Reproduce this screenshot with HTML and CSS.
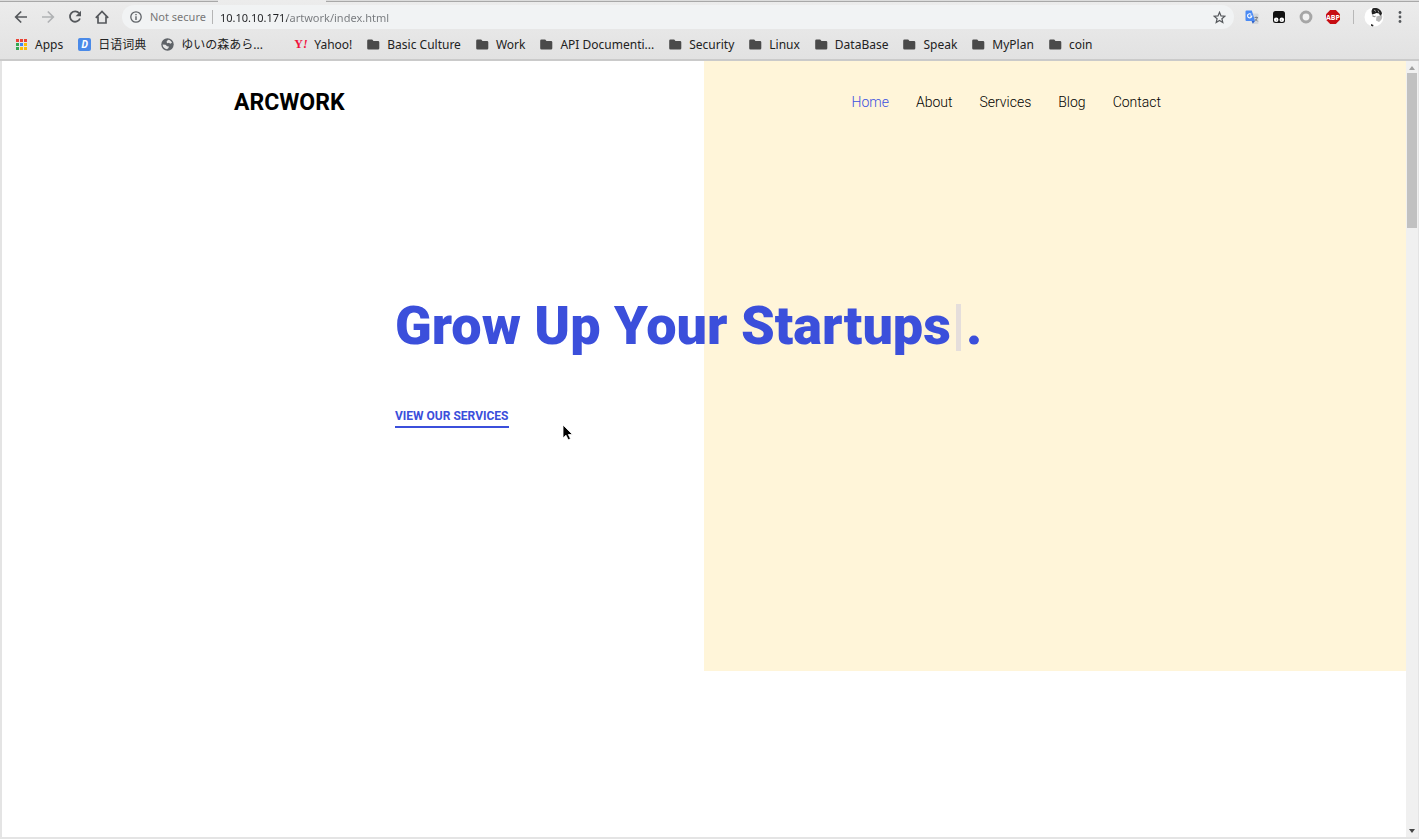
FILE: index.html
```
<!DOCTYPE html>
<html lang="en">
<head>
    <meta charset="UTF-8">
    <title>Arcwork</title>
    <link rel="stylesheet" href="styles.css">
</head>
<body>
    <svg class="symbols" width="0" height="0" aria-hidden="true">
        <symbol id="folder" viewBox="0 0 13 13">
            <path fill="#4a4a4a" d="M1.500 1.500h3.700l1.300 1.500h4.500a1.300 1.300 0 0 1 1.300 1.300v5.900a1.300 1.300 0 0 1-1.300 1.300h-9.500A1.300 1.300 0 0 1 .2 10.200V2.800a1.300 1.300 0 0 1 1.300-1.300z"/>
        </symbol>
    </svg>

    <header class="chrome">
        <div class="tabs"><span class="tab"></span><span class="tab-active"></span><span class="tab-rest"></span></div>

        <div class="toolbar">
            <button class="tool" aria-label="Back">
                <svg width="14" height="14" viewBox="0 0 14 14" fill="none" stroke="#55585c" stroke-width="1.700"><path d="M13 7H2M7.200 1.500L1.700 7l5.500 5.500"/></svg>
            </button>
            <button class="tool" aria-label="Forward">
                <svg width="14" height="14" viewBox="0 0 14 14" fill="none" stroke="#b0b2b4" stroke-width="1.700"><path d="M1 7h11M6.800 1.500L12.300 7l-5.500 5.500"/></svg>
            </button>
            <button class="tool" aria-label="Reload">
                <svg width="14" height="14" viewBox="0 0 14 14"><path fill="none" stroke="#55585c" stroke-width="1.800" d="M11.200 3.200A5.200 5.200 0 1 0 12 8.500"/><path fill="#55585c" d="M13 .8v5.400H7.600z"/></svg>
            </button>
            <button class="tool" aria-label="Home page">
                <svg width="14" height="14" viewBox="0 0 14 14"><path fill="none" stroke="#55585c" stroke-width="1.700" d="M.8 7.800L7 1.500l6.200 6.300M3 6.500v6.500h8V6.500"/></svg>
            </button>

            <div class="address">
                <svg width="12" height="12" viewBox="0 0 12 12"><circle cx="6" cy="6" r="5.200" fill="none" stroke="#5f6368" stroke-width="1.300"/><path fill="#5f6368" d="M5.300 5.200h1.400v3.800H5.300zM5.300 2.900h1.400v1.400H5.300z"/></svg>
                <label class="secure" for="url">Not secure</label>
                <input class="url" id="url" type="text" value="10.10.10.171/artwork/index.html">
                <button class="star" aria-label="Bookmark this page">
                    <svg width="13" height="13" viewBox="0 0 13 13"><path fill="none" stroke="#55585c" stroke-width="1.200" d="M6.500 1.300L8 4.900l3.900.3-3 2.500.9 3.800-3.300-2-3.300 2 .9-3.800-3-2.500 3.900-.3z"/></svg>
                </button>
            </div>

            <div class="extensions">
                <button class="ext" aria-label="Translate">
                    <svg width="14" height="14" viewBox="0 0 14 14"><path fill="#d3d6da" d="M5 3.500h7.500a1 1 0 0 1 1 1V13a1 1 0 0 1-1 1H8z"/><path fill="#4a8af4" d="M1.500.5h5.300L10 11H1.500a1 1 0 0 1-1-1V1.500a1 1 0 0 1 1-1z"/><path fill="#2f62c8" d="M6.600 11H10l-2.200 2.800z"/><path fill="none" stroke="#fff" stroke-width="1.100" d="M6.200 4.300a2.100 2.100 0 1 0 .6 1.700H4.900"/><path fill="none" stroke="#7c8288" d="M9.500 7.500h3.500M11.200 6.500v1M12.300 7.500c-.3 1.400-1 2.500-2 3.200M10.300 9l2.400 2.400"/></svg>
                </button>
                <button class="ext" aria-label="Tampermonkey">
                    <svg width="14" height="14" viewBox="0 0 14 14"><rect x="1" y="1" width="12" height="12" rx="2.500" fill="#111"/><circle cx="4.200" cy="9.700" r="2.300" fill="#fff"/><circle cx="9.800" cy="9.700" r="2.300" fill="#fff"/><circle cx="4.700" cy="10" r=".4"/><circle cx="9.300" cy="10" r=".4"/></svg>
                </button>
                <button class="ext" aria-label="Proxy">
                    <svg width="14" height="14" viewBox="0 0 14 14"><circle cx="7" cy="7" r="4.900" fill="#f2f2f2" stroke="#a6a6a6" stroke-width="3"/></svg>
                </button>
                <button class="ext adblock" aria-label="Adblock Plus"><span>ABP</span></button>
                <span class="divider"></span>
                <button class="avatar" aria-label="Profile">
                    <svg width="20" height="20" viewBox="0 0 20 20"><circle cx="10" cy="10" r="9.500" fill="#fff"/><path fill="#222" d="M8.500 1.500C12 0 17.500 2 18 6.500l-1.500 3-1.500-3-2.500-.5-2.500 1L8 7.500 7.500 4z"/><path fill="#b9b9b9" d="M12.500 9.500L18 8c.8 3-.5 5-3 7l-3-1.500z"/><path fill="#999" d="M8.500 7.500l1.500 1.500 2-.3-1 1.500-2.500-.5z"/><path fill="#222" d="M7 17l2.500 1-.5 1.500-2-.7z"/><path fill="none" stroke="#ddd" stroke-width=".7" d="M10 3l2 1.500M14 3.500l1 2"/></svg>
                </button>
                <button class="menu" aria-label="Menu">
                    <svg width="4" height="14" viewBox="0 0 4 14" fill="#55585c"><circle cx="2" cy="2.500" r="1.400"/><circle cx="2" cy="7" r="1.400"/><circle cx="2" cy="11.500" r="1.400"/></svg>
                </button>
            </div>
        </div>

        <nav class="bookmarks" aria-label="Bookmarks">
            <a href="#">
                <svg width="13" height="13" viewBox="0 0 13 13"><path fill="#ea4335" d="M1 1h3v3H1zM5 1h3v3H5zM9 1h3v3H9z"/><path fill="#34a853" d="M1 5h3v3H1zM1 9h3v3H1z"/><path fill="#4285f4" d="M5 5h3v3H5z"/><path fill="#fbbc05" d="M9 5h3v3H9zM5 9h3v3H5zM9 9h3v3H9z"/><path stroke="#e6e6e6" d="M4.500 0v13M8.500 0v13M0 4.500h13M0 8.500h13"/></svg>
                Apps
            </a>
            <a href="#"><span class="dict">D</span>日语词典</a>
            <a href="#" class="wide">
                <svg width="13" height="13" viewBox="0 0 13 13"><circle cx="6.500" cy="6.500" r="6.200" fill="#5f6368"/><path fill="#e6e6e6" d="M7 1.800c2 .2 3.500 1.500 4 3l-1.800 1L8 4.700 6.200 5.200 5.500 3.800zM1.600 6.500l3 .2 1.500 1.600 1.800.2-.4 1.500-1.500 1.300C3.800 11 1.700 9.300 1.600 6.500z"/></svg>
                <span>ゆいの森あら...</span>
            </a>
            <a href="#"><span class="yahoo">Y<i>!</i></span>Yahoo!</a>
            <a href="#"><svg width="13" height="13"><use href="#folder"/></svg>Basic Culture</a>
            <a href="#"><svg width="13" height="13"><use href="#folder"/></svg>Work</a>
            <a href="#"><svg width="13" height="13"><use href="#folder"/></svg>API Documenti...</a>
            <a href="#"><svg width="13" height="13"><use href="#folder"/></svg>Security</a>
            <a href="#"><svg width="13" height="13"><use href="#folder"/></svg>Linux</a>
            <a href="#"><svg width="13" height="13"><use href="#folder"/></svg>DataBase</a>
            <a href="#"><svg width="13" height="13"><use href="#folder"/></svg>Speak</a>
            <a href="#"><svg width="13" height="13"><use href="#folder"/></svg>MyPlan</a>
            <a href="#"><svg width="13" height="13"><use href="#folder"/></svg>coin</a>
        </nav>
    </header>

    <div class="viewport">
        <main class="page">
            <section class="hero">
                <div class="navbar">
                    <a class="logo" href="#">ARCWORK</a>
                    <nav class="links">
                        <a class="active" href="#">Home</a>
                        <a href="#">About</a>
                        <a href="#">Services</a>
                        <a href="#">Blog</a>
                        <a href="#">Contact</a>
                    </nav>
                </div>
                <div class="intro">
                    <h1>Grow Up Your Startups<span class="caret"></span>.</h1>
                    <a class="cta" href="#">VIEW OUR SERVICES</a>
                </div>
            </section>
        </main>

        <div class="scrollbar">
            <svg width="12" height="12" viewBox="0 0 12 12"><path fill="#a0a0a0" d="M6 5l3 4H3z"/></svg>
            <div class="thumb"></div>
            <svg class="down" width="12" height="12" viewBox="0 0 12 12"><path fill="#444" d="M3 4h6L6 8z"/></svg>
        </div>
    </div>

    <!-- mouse pointer -->
    <svg class="pointer" width="12" height="18" viewBox="0 0 12 18"><path fill="#000" stroke="#fff" stroke-width=".8" d="M1 1v13l3-2.800 2.200 4.600 2.300-1.100-2.200-4.200h4.200z"/></svg>
</body>
</html>
```
FILE: styles.css
```
* { box-sizing: border-box; }

body {
    margin: 0;
    height: 100vh;
    display: flex;
    flex-direction: column;
    overflow: hidden;
    background-color: #e4e4e4;
    font-family: Roboto, sans-serif;
}

a { text-decoration: none; color: inherit; }
svg { display: block; flex: none; }
.symbols { position: absolute; }

button {
    display: flex;
    align-items: center;
    justify-content: center;
    padding: 0;
    border: none;
    background: none;
}

/* Browser bars */
.chrome {
    height: 61px;
    border-bottom: 2px solid #cacaca;
    background: linear-gradient(#ececec, #e2e2e2);
    font-family: "Noto Sans", "Noto Sans CJK JP", sans-serif;
    font-size: 12px;
}

.tabs { display: flex; height: 2px; }
.tab, .tab-rest { border-bottom: 1px solid #a8a8a8; background-color: #dcdcdc; }
.tab { width: 218px; }
.tab-active { width: 108px; }
.tab-rest { flex: 1; }

.toolbar { display: flex; align-items: center; height: 30px; padding-left: 14px; }
.tool { width: 14px; margin-right: 13px; }

.address {
    flex: 1;
    display: flex;
    align-items: center;
    height: 24px;
    padding: 0 8px;
    border-radius: 12px;
    background-color: #f1f3f4;
    font-size: 11px;
}
.secure { margin-left: 8px; padding-right: 6px; border-right: 1px solid #b5b5b5; line-height: 14px; color: #777; }

/* the host part of the address is darker than the path */
.url {
    flex: 1;
    height: 20px;
    padding: 0 0 0 7px;
    border: none;
    outline: none;
    font: inherit;
    color: transparent;
    background: linear-gradient(to right, #202124 74px, #75787c 74px);
    background-clip: text;
    -webkit-background-clip: text;
}

.extensions { display: flex; align-items: center; margin-left: 11px; padding-right: 17px; }
.ext { width: 14px; height: 14px; margin-right: 13px; }
.adblock {
    background-color: #c70d12;
    clip-path: polygon(30% 0, 70% 0, 100% 30%, 100% 70%, 70% 100%, 30% 100%, 0 70%, 0 30%);
    color: #fff;
    font: bold 7px "Open Sans", sans-serif;
}
.divider { width: 1px; height: 14px; margin-right: 10px; background-color: #b8b8b8; }
.avatar { margin-right: 14px; }

.bookmarks { display: flex; align-items: center; gap: 15px; height: 25px; padding-left: 15px; color: #222; }
.bookmarks a { display: flex; align-items: center; gap: 7px; white-space: nowrap; line-height: 18px; }
.bookmarks .wide { width: 118px; }

.dict {
    width: 13px;
    height: 13px;
    border-radius: 2px;
    background-color: #4a8ae8;
    color: #fff;
    font: italic bold 10px/13px "Open Sans", sans-serif;
    text-align: center;
}
.yahoo { width: 13px; color: #f0123c; font: bold 12px/13px "Liberation Serif", serif; }

/* Page */
.viewport { flex: 1; display: flex; min-height: 0; margin: 0 1px 2px 2px; }
.page { flex: 1; background-color: #fff; }

.hero {
    padding-bottom: 243px;
    background: linear-gradient(to right, #fff 50%, #fff5d9 50%);
}

.navbar {
    display: flex;
    align-items: center;
    justify-content: space-between;
    max-width: 940px;
    height: 82px;
    margin: 0 auto;
}
.logo { font-size: 23px; font-weight: 700; color: #000; }
.links { display: flex; gap: 27px; padding-right: 13px; font-size: 14px; font-weight: 300; color: #000; }
.links .active { color: #3c50e0; }

.intro { max-width: 618px; margin: 0 auto; padding-top: 148px; }
h1 { margin: 0 0 44px; font-size: 54px; line-height: 70px; font-weight: 900; color: #3b4fdb; white-space: nowrap; }
.caret { display: inline-block; width: 5px; height: 47px; margin: 0 5px; background-color: #e5dedb; vertical-align: -7px; }
.cta {
    display: inline-block;
    border-bottom: 2px solid #3b4fdb;
    font-size: 12px;
    line-height: 20px;
    font-weight: 700;
    color: #3b4fdb;
}

.scrollbar { display: flex; flex-direction: column; align-items: center; width: 12px; background-color: #f0f0f0; }
.thumb { width: 10px; height: 20%; background-color: #c1c1c1; }
.down { margin-top: auto; }

.pointer { position: absolute; left: 562px; top: 424px; }
```
